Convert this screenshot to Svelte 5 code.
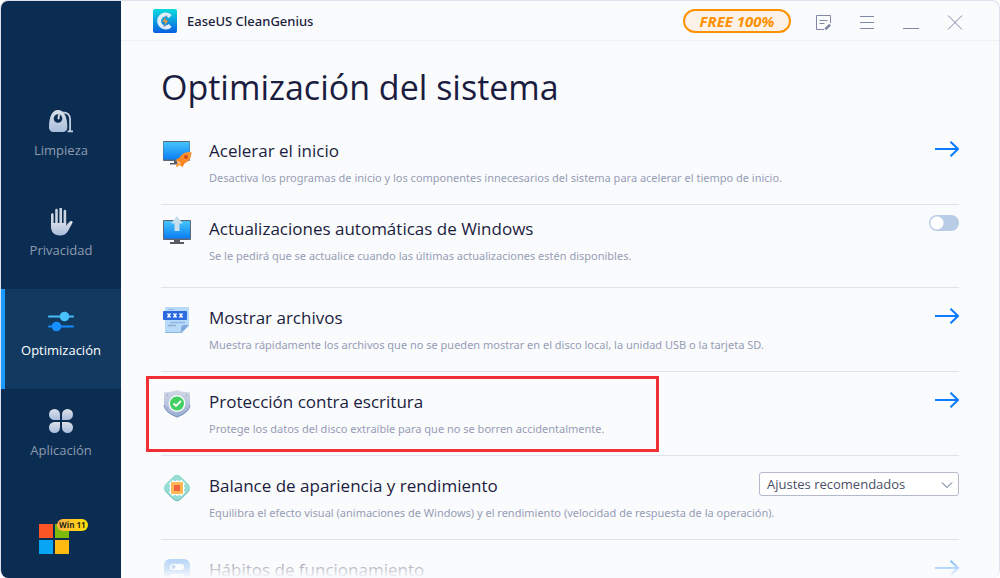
<script lang="ts">
	type Item = {
		id: string;
		title: string;
		text: string;
		action: 'open' | 'toggle' | 'select';
		marked?: boolean;
	};

	const sections = [
		{ id: 'clean', label: 'Limpieza' },
		{ id: 'privacy', label: 'Privacidad' },
		{ id: 'optimize', label: 'Optimización' },
		{ id: 'apps', label: 'Aplicación' }
	];

	const items: Item[] = [
		{
			id: 'startup',
			title: 'Acelerar el inicio',
			text: 'Desactiva los programas de inicio y los componentes innecesarios del sistema para acelerar el tiempo de inicio.',
			action: 'open'
		},
		{
			id: 'updates',
			title: 'Actualizaciones automáticas de Windows',
			text: 'Se le pedirá que se actualice cuando las últimas actualizaciones estén disponibles.',
			action: 'toggle'
		},
		{
			id: 'files',
			title: 'Mostrar archivos',
			text: 'Muestra rápidamente los archivos que no se pueden mostrar en el disco local, la unidad USB o la tarjeta SD.',
			action: 'open'
		},
		{
			id: 'protect',
			title: 'Protección contra escritura',
			text: 'Protege los datos del disco extraíble para que no se borren accidentalmente.',
			action: 'open',
			marked: true
		},
		{
			id: 'balance',
			title: 'Balance de apariencia y rendimiento',
			text: 'Equilibra el efecto visual (animaciones de Windows) y el rendimiento (velocidad de respuesta de la operación).',
			action: 'select'
		},
		{
			id: 'habits',
			title: 'Hábitos de funcionamiento',
			text: '',
			action: 'open'
		}
	];

	let active = $state('optimize');
	let autoUpdate = $state(false);
	let preset = $state('recommended');
</script>

<svg class="defs" width="0" height="0" aria-hidden="true">
	<defs>
		<linearGradient id="steel" x1="0" y1="0" x2="0" y2="1">
			<stop offset="0" stop-color="#dce0e8" />
			<stop offset="1" stop-color="#a9bddd" />
		</linearGradient>
		<linearGradient id="screen" x1="0" y1="0" x2="0" y2="1">
			<stop offset="0" stop-color="#45c4fb" />
			<stop offset="1" stop-color="#0a7ef5" />
		</linearGradient>
		<linearGradient id="brand" x1="0" y1="0" x2="0" y2="1">
			<stop offset="0" stop-color="#0adbe0" />
			<stop offset="1" stop-color="#0a5fe0" />
		</linearGradient>
		<linearGradient id="flame" x1="1" y1="0" x2="0" y2="1">
			<stop offset="0" stop-color="#f79a3a" />
			<stop offset="1" stop-color="#ff7a14" />
		</linearGradient>
		<linearGradient id="shield" x1="0" y1="0" x2="0" y2="1">
			<stop offset="0" stop-color="#d3d9e6" />
			<stop offset="1" stop-color="#9aaed3" />
		</linearGradient>
		<linearGradient id="tile" x1="0" y1="0" x2="0" y2="1">
			<stop offset="0" stop-color="#79b3f2" />
			<stop offset="1" stop-color="#4b8ee8" />
		</linearGradient>
	</defs>
</svg>

<div class="window">
	<nav class="sidebar">
		{#each sections as section (section.id)}
			<button
				class="section"
				class:active={active === section.id}
				type="button"
				onclick={() => (active = section.id)}
			>
				<svg width="26" height="28" viewBox="0 -1 26 28" aria-hidden="true">
					{#if section.id === 'clean'}
						<path d="M1 18C1 8 4 1 10 1s9.300 7 9.300 17c0 3.500-1.800 5-4.800 5H5.800C2.800 23 1 21.500 1 18z" fill="url(#steel)" />
						<circle cx="10" cy="9.500" r="4.300" fill="#0b2d51" />
						<path d="M11 6l-.500 3.500" stroke="#ccd4e2" stroke-width="2" stroke-linecap="round" />
						<path d="M14.500 3.300c5 0 7.600 2.200 7.600 7.200v11.500M19.500 22.300h5.500" fill="none" stroke="#c2cde0" stroke-width="1.800" />
					{:else if section.id === 'privacy'}
						<g stroke="#ccd3e0" stroke-width="2.600" stroke-linecap="round">
							<path d="M4.300 5.500v10M8.500 1v14M12.700 -.300v15M16.900 2v13" />
						</g>
						<path d="M3 14h15.200v2.700c1.500-2 3-3.800 4.500-4.700 1.500-.4 2.300.4 1.800 1.700L20 22c-1.800 3-4 4.500-8.200 4.500C6 26.500 3 23 3 17.500z" fill="url(#steel)" />
					{:else if section.id === 'optimize'}
						<path d="M1 7.500h24" stroke="#45bcf8" stroke-width="2" stroke-linecap="round" />
						<circle cx="16.500" cy="7.500" r="4.800" fill="#48c0fa" />
						<path d="M1 17.500h24" stroke="#148cff" stroke-width="2" stroke-linecap="round" />
						<circle cx="8.500" cy="17.500" r="4.800" fill="#1690ff" />
					{:else}
						<g fill="url(#steel)">
							<path d="M6.500 0A5.500 5.500 0 1 0 6.500 11H12V5.500A5.500 5.500 0 0 0 6.500 0z" />
							<path d="M19.500 0A5.500 5.500 0 1 1 19.500 11H14V5.500A5.500 5.500 0 0 1 19.500 0z" />
							<path d="M6.500 24A5.500 5.500 0 1 1 6.500 13H12v5.500A5.500 5.500 0 0 1 6.500 24z" />
							<path d="M19.500 24A5.500 5.500 0 1 0 19.500 13H14v5.500A5.500 5.500 0 0 0 19.500 24z" />
						</g>
					{/if}
				</svg>
				<span>{section.label}</span>
			</button>
		{/each}

		<div class="system">
			<svg width="30" height="30" viewBox="0 0 30 30" aria-hidden="true">
				<path d="M0 0h14v14H0z" fill="#fb5425" />
				<path d="M16 0h14v14H16z" fill="#7fbb0b" />
				<path d="M0 16h14v14H0z" fill="#08a5f4" />
				<path d="M16 16h14v14H16z" fill="#ffba11" />
			</svg>
			<span class="system-badge">Win 11</span>
		</div>
	</nav>

	<div class="main">
		<header class="titlebar">
			<svg width="24" height="24" viewBox="0 0 24 24" aria-hidden="true">
				<rect width="24" height="24" rx="2" fill="url(#brand)" />
				<path d="M17.300 7.500A6.500 6.500 0 1 0 17.300 16.500" fill="none" stroke="#e3edfa" stroke-width="4" />
				<path d="M13.500 6.500l-4.500 6.500h3l-1.200 5 5-6.800h-3.200z" fill="#fba42c" stroke="#2c78d8" stroke-width=".6" />
			</svg>
			<span class="app-name">EaseUS CleanGenius</span>
			<button class="free" type="button">FREE 100%</button>
			<div class="controls">
				<button type="button" aria-label="Comentarios">
					<svg width="16" height="16" viewBox="0 0 16 16">
						<path d="M9 14.500H1.500V.500h14V8M4.500 5.500h8M4.500 8.500h5" />
						<path d="M10.300 14.200l4.800-4.600" stroke-width="2.600" />
					</svg>
				</button>
				<button type="button" aria-label="Menú">
					<svg width="16" height="16" viewBox="0 0 16 16"><path d="M1 1.500h14M1 7.500h14M1 13.500h14" /></svg>
				</button>
				<button type="button" aria-label="Minimizar">
					<svg width="16" height="16" viewBox="0 0 16 16"><path d="M0 13.500h16" /></svg>
				</button>
				<button type="button" aria-label="Cerrar">
					<svg width="16" height="16" viewBox="0 0 16 16"><path d="M1 .500l14 14M15 .500l-14 14" /></svg>
				</button>
			</div>
		</header>

		<main class="content">
			<h1>Optimización del sistema</h1>

			<ul class="items">
				{#each items as item (item.id)}
					<li class="item" class:compact={item.action === 'toggle'}>
						<svg class="item-icon" width="32" height="32" viewBox="0 0 32 32" aria-hidden="true">
							{#if item.id === 'startup'}
								<rect x="2" y="4" width="27" height="20" rx="1" fill="#5d6675" />
								<rect x="2.500" y="5" width="26" height="17.500" fill="url(#screen)" />
								<path d="M13 24h6v2h4v1.500H9V26h4z" fill="#565b66" />
								<path d="M30.500 15c-6-.3-9.500 1.500-12 5.500l-4 2.500 2 2-1 5 3-2 3 2 2-3.500c5-2.500 7-6 7-11.500z" fill="url(#flame)" />
								<circle cx="25" cy="20" r="2" fill="#d84b13" />
								<path d="M16.500 23.500l3.500 3-3.500 2z" fill="#fff0e4" />
								<path d="M15.500 29.500l3-4" stroke="#ff9a2d" stroke-width="1.500" />
							{:else if item.id === 'updates'}
								<rect x="2" y="5" width="28" height="20" rx="1" fill="#5d6675" />
								<rect x="3" y="6" width="26" height="17.500" fill="url(#screen)" />
								<path d="M13 25h6v2h4v2H9v-2h4z" fill="#565b66" />
								<path d="M16 1l6 7.500h-3.500V16h-5V8.500H10z" fill="#c8dfef" />
							{:else if item.id === 'files'}
								<path d="M4 3h24v19l-7 7H4z" fill="#b7daf8" />
								<path d="M28 21l-8 8v-6l2-2z" fill="#7fa9dd" />
								<path d="M4 28.500h17" stroke="#8bb5de" />
								<path d="M9 18.500h15" stroke="#93b5e8" stroke-width="1.500" />
								<path d="M7 21.500h8" stroke="#93a9cf" stroke-width="1.500" />
								<path d="M7 5.500h6" stroke="#93b5e8" />
								<rect x="2" y="7" width="24" height="9" rx="1" fill="#2d69df" />
								<path d="M6.500 9.500l3 4M9.500 9.500l-3 4M12.500 9.500l3 4M15.500 9.500l-3 4M18.500 9.500l3 4M21.500 9.500l-3 4" stroke="#fff" stroke-width="1.300" />
							{:else if item.id === 'protect'}
								<path d="M16 2c4 1.500 8 2 13 2.500V17c0 6-6 9.500-13 12.500C9 26.500 3 23 3 17V4.500C8 4 12 3.500 16 2z" fill="url(#shield)" />
								<path d="M16 29C9 26 3.500 22.500 3 17M16 29C23 26 28.500 22.500 29 17" fill="none" stroke="#7e91bb" />
								<path d="M6 7h1M25 7h1M6 20h1M25 20h1" stroke="#8690a9" stroke-width="1.200" />
								<circle cx="16" cy="15.500" r="8.500" fill="#f2faf6" />
								<circle cx="16" cy="15.500" r="7" fill="#42cf61" />
								<path d="M12.500 15.500l2.500 2.500 5-5" fill="none" stroke="#fff" stroke-width="1.800" />
							{:else if item.id === 'balance'}
								<rect x="5.500" y="6" width="21" height="21" rx="5" fill="#6bb9bd" transform="rotate(45 16 16.500)" />
								<rect x="5.500" y="5" width="21" height="21" rx="5" fill="#96dcd2" transform="rotate(45 16 15.500)" />
								<path d="M12 8v16M16 8v16M20 8v16M8 12h16M8 16h16M8 20h16" stroke="#fff" stroke-width="1.600" />
								<rect x="9.500" y="9.500" width="13" height="13" rx="1.500" fill="#ffb855" stroke="#fff" />
								<rect x="13" y="13" width="6" height="6" fill="#f0653f" />
							{:else}
								<rect x="3" y="3" width="26" height="26" rx="6" fill="url(#tile)" />
								<rect x="9" y="8" width="14" height="6" rx="3" fill="#fff" />
								<circle cx="12.500" cy="11" r="2" fill="#5b9aea" />
								<rect x="9" y="18" width="14" height="6" rx="3" fill="#fff" />
								<circle cx="19.500" cy="21" r="2" fill="#5b9aea" />
							{/if}
						</svg>

						<div class="item-text">
							<h2 id={item.id}>{item.title}</h2>
							<p>{item.text}</p>
						</div>

						{#if item.action === 'toggle'}
							<input
								class="switch"
								type="checkbox"
								role="switch"
								aria-labelledby={item.id}
								bind:checked={autoUpdate}
							/>
						{:else if item.action === 'select'}
							<div class="select">
								<select aria-labelledby={item.id} bind:value={preset}>
									<option value="recommended">Ajustes recomendados</option>
									<option value="appearance">Mejor apariencia</option>
									<option value="performance">Mejor rendimiento</option>
								</select>
								<svg class="chevron" width="12" height="8" viewBox="0 0 12 8" aria-hidden="true">
									<path d="M1 1.500l5 5 5-5" fill="none" stroke="#4a5a80" />
								</svg>
							</div>
						{:else}
							<button class="open" type="button" aria-labelledby={item.id}>
								<svg width="24" height="16" viewBox="0 0 24 16" aria-hidden="true">
									<path d="M0 8h23M15.500 .800L23 8l-7.500 7.200" fill="none" stroke="#0b7cff" stroke-width="2" />
								</svg>
							</button>
						{/if}

						{#if item.marked}
							<div class="mark"></div>
						{/if}
					</li>
				{/each}
			</ul>
		</main>
		<div class="fade"></div>
	</div>
</div>

<style>
	:global(body) {
		background: #fff;
	}

	.defs {
		position: absolute;
	}

	.window {
		display: flex;
		box-sizing: border-box;
		height: 100vh;
		border: 1px solid #dbe3ef;
		border-width: 1px 1px 0;
		border-radius: 8px;
		overflow: hidden;
		background: #fafbfd;
		color: #1b1d40;
		font-family: 'Open Sans', 'Noto Sans', sans-serif;
	}

	button {
		padding: 0;
		border: 0;
		background: none;
		font-family: inherit;
		cursor: pointer;
	}

	.sidebar {
		display: flex;
		flex: 0 0 120px;
		flex-direction: column;
		box-sizing: border-box;
		padding-top: 88px;
		background: #0b2d51;
	}

	.section {
		display: flex;
		flex-direction: column;
		align-items: center;
		gap: 4px;
		box-sizing: border-box;
		height: 100px;
		padding-top: 19px;
		border: solid transparent;
		border-width: 0 4px;
		color: #8d9bb0;
		font-size: 13px;
		line-height: 20px;
	}

	.section.active {
		border-left-color: #1c9bff;
		background: #123a61;
		color: #fff;
	}

	.system {
		position: relative;
		height: 30px;
		margin: 35px 0 0 38px;
	}

	.system-badge {
		position: absolute;
		top: -5px;
		left: 18px;
		padding: 0 2px;
		border-radius: 6px;
		background: linear-gradient(90deg, #ffb04a, #ffe000);
		color: #2b2a1c;
		font-size: 8px;
		font-weight: 700;
		line-height: 12px;
		white-space: nowrap;
	}

	.main {
		position: relative;
		flex: 1;
		min-width: 0;
		overflow: hidden;
	}

	.titlebar {
		display: flex;
		align-items: center;
		box-sizing: border-box;
		height: 40px;
		padding: 0 36px 0 32px;
		border-bottom: 1px solid #f0f1f4;
	}

	.app-name {
		margin-left: 10px;
		font-family: 'Noto Sans', sans-serif;
		font-size: 13px;
		font-weight: 500;
	}

	.free {
		width: 108px;
		height: 24px;
		margin-left: auto;
		border: 2px solid #ff9000;
		border-radius: 12px;
		background: #fbf1e6;
		color: #ff9000;
		font-size: 15px;
		font-style: italic;
		font-weight: 700;
		line-height: 20px;
	}

	.controls {
		display: flex;
		gap: 28px;
		margin: 4px 0 0 24px;
	}

	.controls svg {
		display: block;
		fill: none;
		stroke: #8088a6;
	}

	.content {
		padding: 20px 40px 0;
	}

	h1 {
		margin: 0;
		font-size: 34px;
		font-weight: 400;
		line-height: 52px;
	}

	.items {
		margin: 8px 0 0;
		padding: 0;
		list-style: none;
	}

	.item {
		position: relative;
		display: flex;
		align-items: flex-start;
		box-sizing: border-box;
		height: 84px;
		padding-top: 16px;
		border-bottom: 1px solid #e0e3eb;
	}

	.item.compact {
		height: 83px;
		padding-top: 10px;
	}

	.item-icon {
		flex: none;
	}

	.item-text {
		flex: 1;
		min-width: 0;
		margin-left: 16px;
	}

	h2 {
		margin: 0;
		font-size: 17px;
		font-weight: 400;
		line-height: 28px;
	}

	p {
		margin: 3px 0 0;
		color: #969db5;
		font-family: 'Noto Sans', sans-serif;
		font-size: 11px;
		line-height: 20px;
		white-space: nowrap;
	}

	.open {
		margin-top: 4px;
	}

	.open svg {
		display: block;
	}

	.switch {
		appearance: none;
		width: 30px;
		height: 16px;
		margin: 0;
		border-radius: 8px;
		background: radial-gradient(circle at 8px 8px, #fff 6px, transparent 7px) #b9cce6;
	}

	.switch:checked {
		background: radial-gradient(circle at 22px 8px, #fff 6px, transparent 7px) #0b7cff;
	}

	.select {
		position: relative;
	}

	select {
		appearance: none;
		display: block;
		width: 200px;
		height: 24px;
		padding: 0 24px 0 7px;
		border: 1px solid #b4b9cb;
		border-radius: 3px;
		background: #fff;
		color: #4a4f66;
		font-family: inherit;
		font-size: 13px;
	}

	.chevron {
		position: absolute;
		top: 9px;
		right: 6px;
		pointer-events: none;
	}

	.mark {
		position: absolute;
		top: 4px;
		left: -15px;
		box-sizing: border-box;
		width: 513px;
		height: 76px;
		border: 3px solid #f23034;
		pointer-events: none;
	}

	.fade {
		position: absolute;
		right: 0;
		bottom: 0;
		left: 0;
		height: 36px;
		background: linear-gradient(rgba(250, 251, 253, 0), #fafbfd);
		pointer-events: none;
	}
</style>
